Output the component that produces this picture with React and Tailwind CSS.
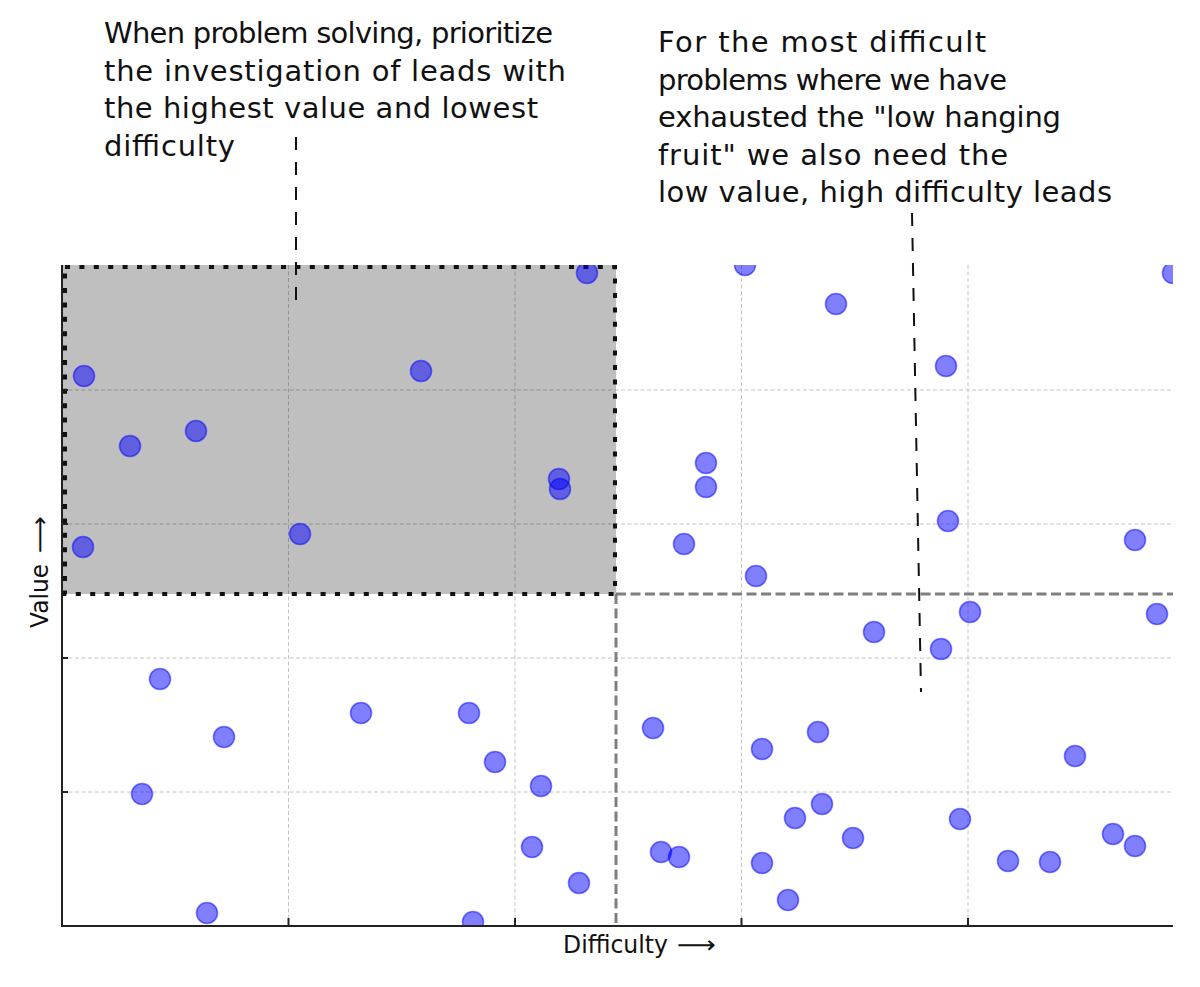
import React from "react";

const L = 62;
const R = 1173;
const T = 265;
const B = 926;

const points = [
  [587, 273], [84, 376], [421, 371], [130, 446], [196, 431], [559, 479], [560, 489], [83, 547], [300, 534],
  [745, 265], [836, 304], [1173, 273], [946, 366], [706, 463], [706, 487], [948, 521], [684, 544],
  [1135, 540], [756, 576], [970, 612], [1157, 614], [874, 632], [941, 649],
  [160, 679], [224, 737], [142, 794], [361, 713], [207, 913], [469, 713], [495, 762], [541, 786],
  [532, 847], [579, 883], [473, 922],
  [653, 728], [762, 749], [818, 732], [1075, 756], [822, 804], [795, 818], [960, 819], [853, 838],
  [1113, 834], [1135, 846], [661, 852], [679, 857], [762, 863], [1008, 861], [1050, 862], [788, 900],
];

const note1 = [
  ["When problem solving, prioritize", 43, 449],
  ["the investigation of leads with", 80.5, 462],
  ["the highest value and lowest", 118, 434],
  ["difficulty", 155.5, 131],
];

const note2 = [
  ["For the most difficult", 52, 328],
  ["problems where we have", 89.5, 349],
  ['exhausted the "low hanging', 127, 403],
  ['fruit" we also need the', 164.5, 350],
  ["low value, high difficulty leads", 202, 454],
];

const vGrid = [288.5, 515, 741.5, 968];
const hGrid = [390, 524, 658, 792];

export default function App() {
  const font = "'DejaVu Sans', 'Liberation Sans', sans-serif";
  return (
    <div className="w-[1200px] h-[987px] bg-white">
      <svg width="1200" height="987" viewBox="0 0 1200 987" className="block">
        <defs>
          <clipPath id="plot">
            <rect x={L} y={T} width={R - L} height={B - T} />
          </clipPath>
        </defs>

        {/* notes */}
        <g fontFamily={font} fontSize="29" fill="#111">
          {note1.map(([t, y, w]) => (
            <text key={t} x="104" y={y} textLength={w} lengthAdjust="spacing">{t}</text>
          ))}
          {note2.map(([t, y, w]) => (
            <text key={t} x="658" y={y} textLength={w} lengthAdjust="spacing">{t}</text>
          ))}
        </g>

        {/* grid */}
        <g stroke="#c4c4c4" strokeWidth="1" strokeDasharray="4 2.5">
          {vGrid.map((x) => (
            <line key={x} x1={x} y1={T} x2={x} y2={B} />
          ))}
          {hGrid.map((y) => (
            <line key={y} x1={L} y1={y} x2={R} y2={y} />
          ))}
        </g>

        {/* shaded quadrant */}
        <rect x={L} y={T} width={616 - L} height={594 - T} fill="#000" fillOpacity="0.25" />

        {/* gray dashed quadrant lines */}
        <g stroke="#7f7f7f" strokeWidth="3" strokeDasharray="10 4.5">
          <line x1="616" y1="594" x2={R} y2="594" />
          <line x1="616" y1="594" x2="616" y2={B} />
        </g>

        {/* dotted border */}
        <rect x="65" y="267" width="550" height="327" fill="none" stroke="#111" strokeWidth="4" strokeDasharray="5 9.4" />

        {/* points */}
        <g clipPath="url(#plot)">
          {points.map(([x, y], i) => (
            <circle key={i} cx={x} cy={y} r="10.5" fill="#0000ff" fillOpacity="0.5" stroke="#0000ff" strokeOpacity="0.5" strokeWidth="1.6" />
          ))}
        </g>

        {/* spines & ticks */}
        <g stroke="#222" strokeWidth="2">
          <line x1={L} y1={T} x2={L} y2={B + 1} />
          <line x1={L - 1} y1={B} x2={R} y2={B} />
          {vGrid.map((x) => (
            <line key={x} x1={x} y1={B} x2={x} y2={B - 8} />
          ))}
          {hGrid.map((y) => (
            <line key={y} x1={L} y1={y} x2={L + 6} y2={y} />
          ))}
        </g>

        {/* annotation leader lines */}
        <g stroke="#111" strokeWidth="2" strokeDasharray="13 12">
          <line x1="296" y1="137" x2="296" y2="306" />
          <line x1="912" y1="213" x2="921" y2="692" />
        </g>

        {/* axis labels */}
        <g fontFamily={font} fontSize="24" fill="#111">
          <text x="563" y="953" textLength="105" lengthAdjust="spacingAndGlyphs">Difficulty</text>
          <text x="677" y="953" textLength="39" lengthAdjust="spacingAndGlyphs">⟶</text>
          <g transform="translate(48 628) rotate(-90)">
            <text x="0" y="0" textLength="64" lengthAdjust="spacingAndGlyphs">Value</text>
            <text x="75" y="0" textLength="37" lengthAdjust="spacingAndGlyphs">⟶</text>
          </g>
        </g>
      </svg>
    </div>
  );
}
